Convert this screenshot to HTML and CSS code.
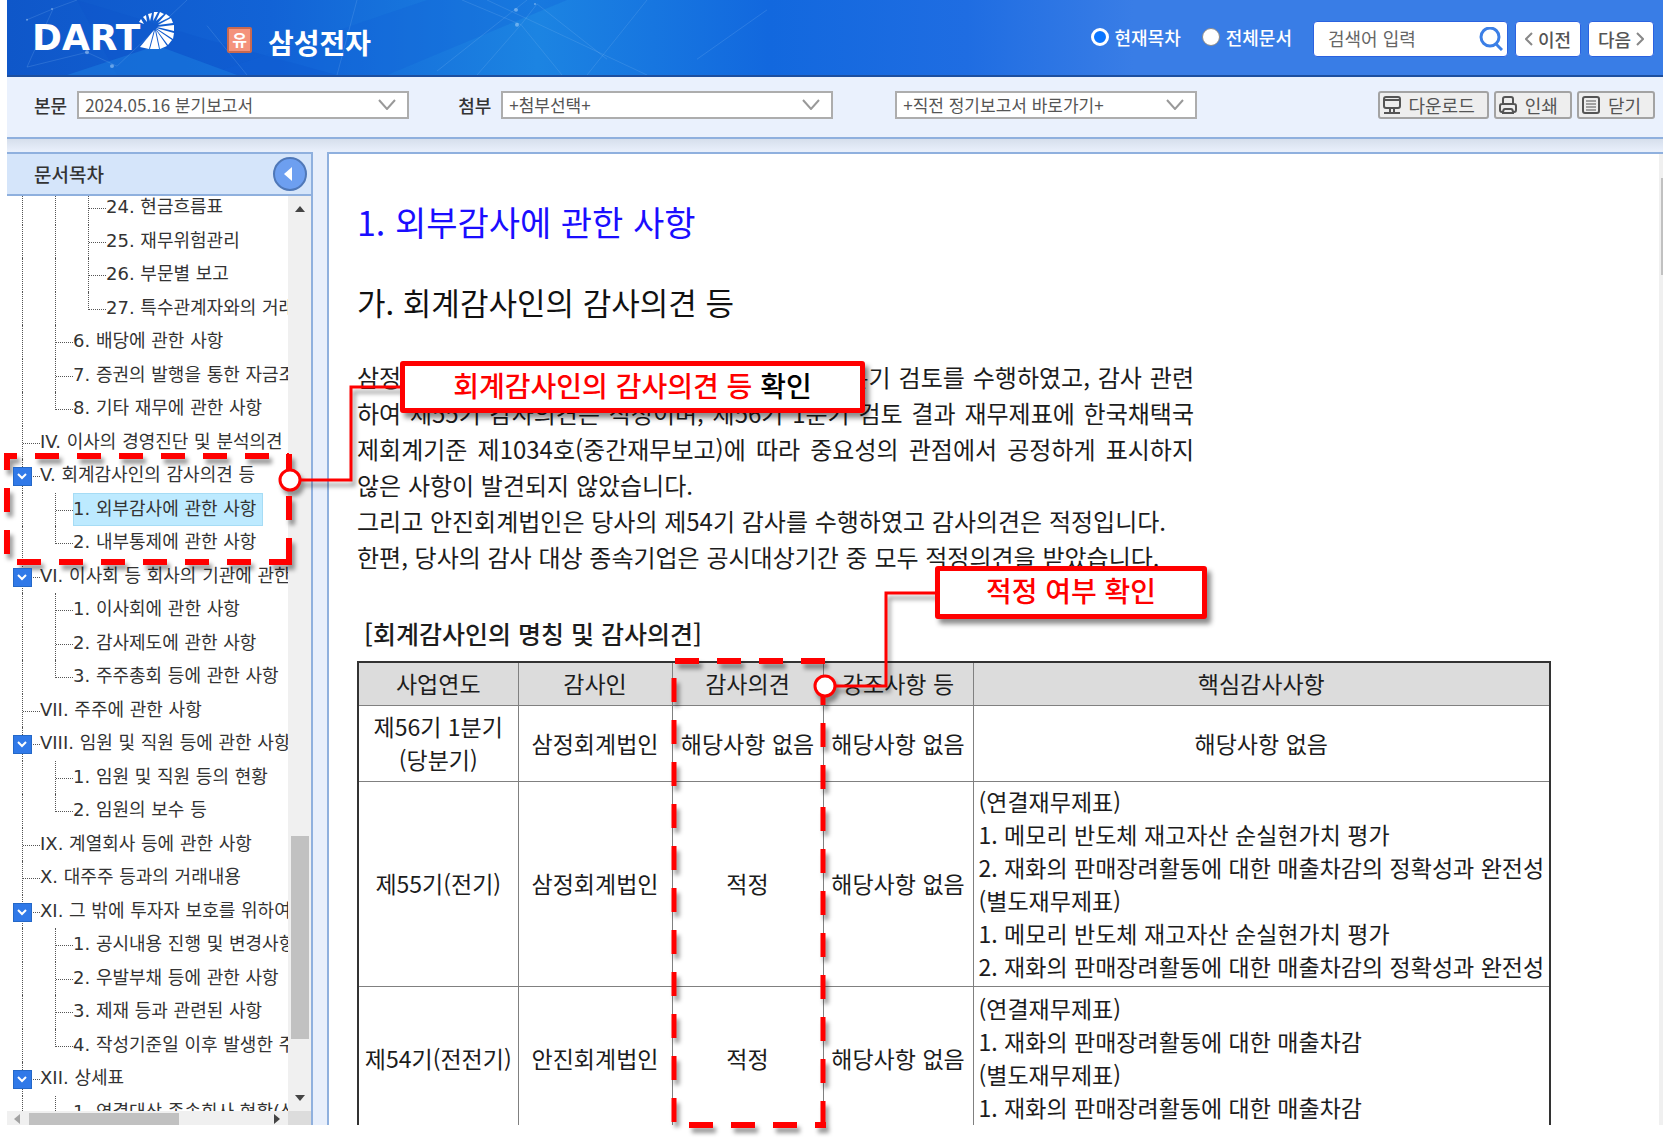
FILE: index.html
```html
<!DOCTYPE html>
<html lang="ko">
<head>
<meta charset="utf-8">
<title>삼성전자 - 분기보고서</title>
<link rel="stylesheet" href="styles.css">
</head>
<body>
<div class="app">
  <header class="top">
    <svg class="top-art" viewBox="0 0 1656 76" preserveAspectRatio="none" aria-hidden="true">
      <defs>
        <linearGradient id="sea" x1="0" x2="1"><stop offset="0" stop-color="#0f57c9"/><stop offset=".16" stop-color="#1263d6"/><stop offset=".32" stop-color="#1c84e2"/><stop offset=".46" stop-color="#1268de"/><stop offset=".58" stop-color="#1f6de2"/><stop offset=".68" stop-color="#397de6"/><stop offset="1" stop-color="#397de6"/></linearGradient>
      </defs>
      <path fill="url(#sea)" d="M0 0h1656v76H0z"/>
      <path fill="#0c54cb" opacity=".3" d="M70 0L110 76H330L200 40z"/>
      <path fill="#0f60d6" opacity=".3" d="M200 76L420 0H560L380 76z"/>
      <path fill="#1b7fe2" opacity=".5" d="M60 76L150 46L230 76z"/>
      <g stroke="#8fc4f7" stroke-opacity=".2" fill="none">
        <path d="M20 20L46 9L70 0M20 68L46 9M20 68L80 53L110 67L180 0M200 26L240 76M330 76L350 0M430 72L520 0M455 0L514 25L470 76M514 25L555 76M514 25L530 4L600 60M480 0L640 76M640 0L580 76M690 60L760 10"/>
      </g>
      <g fill="#b9dbfb" fill-opacity=".5"><circle cx="20" cy="20" r="1"/><circle cx="45" cy="9" r="1"/><circle cx="80" cy="53" r="2"/><circle cx="105" cy="67" r="2"/><circle cx="510" cy="25" r="2"/><circle cx="509" cy="10" r="2"/><circle cx="528" cy="4" r="1"/></g>
    </svg>
    <a class="logo" href="#">DART<svg class="fan" viewBox="0 0 36 38" aria-hidden="true">
      <g fill="#fff">
        <path d="M16 18L11 37L2 35z"/><path d="M17 18L21 37L12 37z"/><path d="M18 18L29 34L22 37z"/><path d="M18 17L34 28L30 33z"/><path d="M18 16L36 21L35 27z"/><path d="M19 15L36 13L36 19z"/><path d="M20 13L33 6L35 11z"/><path d="M20 11L28 2L32 5z"/><path d="M18 9L22 0L26 2z"/><path d="M15 9L16 0L20 0z"/><path d="M12 9L10 2L14 1z"/><path d="M9 10L5 5L8 3z"/><path d="M6 12L1 10L3 7z"/>
      </g></svg></a>
    <span class="badge">유</span>
    <h1 class="company">삼성전자</h1>
    <form class="search">
      <label class="scope"><input type="radio" name="scope" checked>현재목차</label>
      <label class="scope"><input type="radio" name="scope">전체문서</label>
      <div class="searchbox">
        <input type="text" placeholder="검색어 입력" aria-label="검색어 입력">
        <button type="button" aria-label="검색"><svg viewBox="0 0 24 24" width="24" height="24"><circle cx="11" cy="10" r="9" fill="none" stroke="#3b7fe6" stroke-width="3"/><path d="M17 17l6 6" stroke="#3b7fe6" stroke-width="3"/></svg></button>
      </div>
      <button type="button" class="step"><svg viewBox="0 0 8 14" width="8" height="14"><path d="M7 1L1 7l6 6"/></svg>이전</button>
      <button type="button" class="step">다음<svg viewBox="0 0 8 14" width="8" height="14"><path d="M1 1l6 6l-6 6"/></svg></button>
    </form>
  </header>

  <div class="toolbar">
    <label for="doc">본문</label>
    <div class="pick wide"><select id="doc"><option>2024.05.16 분기보고서</option></select><svg viewBox="0 0 18 11" width="18" height="11"><path d="M1 1l8 9l8-9"/></svg></div>
    <label for="att" class="second">첨부</label>
    <div class="pick wide"><select id="att"><option>+첨부선택+</option></select><svg viewBox="0 0 18 11" width="18" height="11"><path d="M1 1l8 9l8-9"/></svg></div>
    <div class="pick prev"><select aria-label="직전 정기보고서"><option>+직전 정기보고서 바로가기+</option></select><svg viewBox="0 0 18 11" width="18" height="11"><path d="M1 1l8 9l8-9"/></svg></div>
    <div class="tools">
      <button type="button"><svg viewBox="0 0 18 18" width="18" height="18"><rect x="1" y="1" width="16" height="11" rx="2"/><path d="M1 4h16M7 12v4M11 12v4M1 17h16"/></svg>다운로드</button>
      <button type="button"><svg viewBox="0 0 18 18" width="18" height="18"><path d="M4 8V3q0-2 2-2h6q2 0 2 2v5M4 16H3q-2 0-2-2v-4q0-2 2-2h12q2 0 2 2v4q0 2-2 2h-1M4 17q0-4 2-4h6q2 0 2 4z"/></svg>인쇄</button>
      <button type="button"><svg viewBox="0 0 18 18" width="18" height="18"><rect x="1" y="1" width="16" height="16" rx="2"/><path class="fine" d="M4 5h10M4 8h10M4 11h10M4 14h10"/></svg>닫기</button>
    </div>
  </div>

  <div class="work">
    <nav class="side" aria-label="문서목차">
      <div class="side-head"><h2>문서목차</h2><button type="button" aria-label="목차 접기"><svg viewBox="0 0 8 14" width="8" height="14"><path d="M8 0v14L0 7z" fill="#fff"/></svg></button></div>
      <div class="side-body">
        <div class="tree-clip">
          <ul class="tree">
            <li><i class="rail"></i><i class="rail"></i><i class="tee"></i><a href="#">24. 현금흐름표</a></li>
            <li><i class="rail"></i><i class="rail"></i><i class="tee"></i><a href="#">25. 재무위험관리</a></li>
            <li><i class="rail"></i><i class="rail"></i><i class="tee"></i><a href="#">26. 부문별 보고</a></li>
            <li><i class="rail"></i><i class="rail"></i><i class="tee last"></i><a href="#">27. 특수관계자와의 거래</a></li>
            <li><i class="rail"></i><i class="tee"></i><a href="#">6. 배당에 관한 사항</a></li>
            <li><i class="rail"></i><i class="tee"></i><a href="#">7. 증권의 발행을 통한 자금조달에 관한 사항</a></li>
            <li><i class="rail"></i><i class="tee last"></i><a href="#">8. 기타 재무에 관한 사항</a></li>
            <li><i class="tee"></i><a href="#">IV. 이사의 경영진단 및 분석의견</a></li>
            <li><i class="tee"><button type="button" aria-label="접기"><svg viewBox="0 0 11 7" width="11" height="7"><path d="M1 1l4 4l4-4"/></svg></button></i><a href="#">V. 회계감사인의 감사의견 등</a></li>
            <li><i class="rail"></i><i class="tee"></i><a href="#" class="on" aria-current="page">1. 외부감사에 관한 사항</a></li>
            <li><i class="rail"></i><i class="tee last"></i><a href="#">2. 내부통제에 관한 사항</a></li>
            <li><i class="tee"><button type="button" aria-label="접기"><svg viewBox="0 0 11 7" width="11" height="7"><path d="M1 1l4 4l4-4"/></svg></button></i><a href="#">VI. 이사회 등 회사의 기관에 관한 사항</a></li>
            <li><i class="rail"></i><i class="tee"></i><a href="#">1. 이사회에 관한 사항</a></li>
            <li><i class="rail"></i><i class="tee"></i><a href="#">2. 감사제도에 관한 사항</a></li>
            <li><i class="rail"></i><i class="tee last"></i><a href="#">3. 주주총회 등에 관한 사항</a></li>
            <li><i class="tee"></i><a href="#">VII. 주주에 관한 사항</a></li>
            <li><i class="tee"><button type="button" aria-label="접기"><svg viewBox="0 0 11 7" width="11" height="7"><path d="M1 1l4 4l4-4"/></svg></button></i><a href="#">VIII. 임원 및 직원 등에 관한 사항</a></li>
            <li><i class="rail"></i><i class="tee"></i><a href="#">1. 임원 및 직원 등의 현황</a></li>
            <li><i class="rail"></i><i class="tee last"></i><a href="#">2. 임원의 보수 등</a></li>
            <li><i class="tee"></i><a href="#">IX. 계열회사 등에 관한 사항</a></li>
            <li><i class="tee"></i><a href="#">X. 대주주 등과의 거래내용</a></li>
            <li><i class="tee"><button type="button" aria-label="접기"><svg viewBox="0 0 11 7" width="11" height="7"><path d="M1 1l4 4l4-4"/></svg></button></i><a href="#">XI. 그 밖에 투자자 보호를 위하여 필요한 사항</a></li>
            <li><i class="rail"></i><i class="tee"></i><a href="#">1. 공시내용 진행 및 변경사항</a></li>
            <li><i class="rail"></i><i class="tee"></i><a href="#">2. 우발부채 등에 관한 사항</a></li>
            <li><i class="rail"></i><i class="tee"></i><a href="#">3. 제재 등과 관련된 사항</a></li>
            <li><i class="rail"></i><i class="tee last"></i><a href="#">4. 작성기준일 이후 발생한 주요사항</a></li>
            <li><i class="tee"><button type="button" aria-label="접기"><svg viewBox="0 0 11 7" width="11" height="7"><path d="M1 1l4 4l4-4"/></svg></button></i><a href="#">XII. 상세표</a></li>
            <li><i class="rail"></i><i class="tee"></i><a href="#">1. 연결대상 종속회사 현황(상세)</a></li>
          </ul>
        </div>
        <div class="vbar"><svg viewBox="0 0 10 6" width="10" height="6"><path d="M0 6L5 0l5 6z"/></svg><span class="vthumb"></span><svg viewBox="0 0 10 6" width="10" height="6"><path d="M0 0L5 6l5-6z"/></svg></div>
        <div class="hbar"><svg class="dim" viewBox="0 0 6 10" width="6" height="10"><path d="M6 0L0 5l6 5z"/></svg><span class="hthumb"></span><svg viewBox="0 0 6 10" width="6" height="10"><path d="M0 0L6 5l-6 5z"/></svg></div>
        <div class="corner"></div>
      </div>
    </nav>

    <main class="doc">
      <div class="page">
        <h2 class="title">1. 외부감사에 관한 사항</h2>
        <h3 class="sub">가. 회계감사인의 감사의견 등</h3>
        <div class="body">
          <p><span class="full">삼정회계법인은 당사의 제55기 감사 및 제56기 1분기 검토를 수행하였고, 감사 관련</span><span class="full">하여 제55기 감사의견은 적정이며, 제56기 1분기 검토 결과 재무제표에 한국채택국</span><span class="full">제회계기준 제1034호(중간재무보고)에 따라 중요성의 관점에서 공정하게 표시하지</span><span>않은 사항이 발견되지 않았습니다.</span></p>
          <p>그리고 안진회계법인은 당사의 제54기 감사를 수행하였고 감사의견은 적정입니다.</p>
          <p>한편, 당사의 감사 대상 종속기업은 공시대상기간 중 모두 적정의견을 받았습니다.</p>
        </div>
        <table>
          <caption>[회계감사인의 명칭 및 감사의견]</caption>
          <colgroup><col class="c1"><col class="c2"><col class="c3"><col class="c4"><col class="c5"></colgroup>
          <thead><tr><th>사업연도</th><th>감사인</th><th>감사의견</th><th>강조사항 등</th><th>핵심감사사항</th></tr></thead>
          <tbody>
            <tr class="r1"><td>제56기 1분기<br>(당분기)</td><td>삼정회계법인</td><td>해당사항 없음</td><td>해당사항 없음</td><td>해당사항 없음</td></tr>
            <tr class="r2"><td>제55기(전기)</td><td>삼정회계법인</td><td>적정</td><td>해당사항 없음</td><td class="kam">(연결재무제표)<br>1. 메모리 반도체 재고자산 순실현가치 평가<br>2. 재화의 판매장려활동에 대한 매출차감의 정확성과 완전성<br>(별도재무제표)<br>1. 메모리 반도체 재고자산 순실현가치 평가<br>2. 재화의 판매장려활동에 대한 매출차감의 정확성과 완전성</td></tr>
            <tr class="r3"><td>제54기(전전기)</td><td>안진회계법인</td><td>적정</td><td>해당사항 없음</td><td class="kam">(연결재무제표)<br>1. 재화의 판매장려활동에 대한 매출차감<br>(별도재무제표)<br>1. 재화의 판매장려활동에 대한 매출차감</td></tr>
          </tbody>
        </table>
      </div>
      <div class="docbar"><span></span></div>
    </main>
  </div>

  <div class="notes">
    <svg width="1300" height="1141" viewBox="0 0 1300 1141" aria-hidden="true">
      <g class="dash">
        <path d="M4 456H289" stroke-dashoffset="11"/><path d="M289 454V562" /><path d="M17 562H292"/><path d="M7 453V562" stroke-dashoffset="7"/>
      </g>
      <g class="dash thin">
        <path d="M674 678V1125"/><path d="M823 681V1128"/>
        <path d="M675 661H826" class="h"/><path d="M689 1125H826" class="h"/>
      </g>
      <g class="wire">
        <path d="M289 480H351V387H400"/><circle cx="290" cy="480" r="10"/>
        <path d="M825 686H886V593H935"/><circle cx="825" cy="686" r="10"/>
      </g>
    </svg>
    <div class="callout one">회계감사인의 감사의견 등 <b>확인</b></div>
    <div class="callout two">적정 여부 확인</div>
  </div>
</div>
</body>
</html>
```
FILE: styles.css
```css
* { box-sizing: border-box; }
body {
  margin: 0;
  background: #fff;
  font-family: "Noto Sans CJK KR", "Liberation Sans", sans-serif;
  color: #333;
}
button, input, select { font: inherit; color: inherit; margin: 0; }
a { color: inherit; text-decoration: none; }
h1, h2, h3, p, ul { margin: 0; padding: 0; }

.app {
  position: relative;
  display: flex;
  flex-direction: column;
  height: 100vh;
  padding: 0 0 16px 7px;
  overflow: hidden;
}

/* top banner */
.top {
  position: relative;
  display: flex;
  align-items: center;
  flex: none;
  height: 77px;
  padding: 0 9px 0 25px;
  border-bottom: 2px solid #1d4f9f;
  background: #397de6;
  color: #fff;
}
.top-art { position: absolute; left: 0; top: 0; width: 100%; height: 100%; }
.logo {
  position: relative;
  display: flex;
  width: 144px;
  font: bold 36px/40px "DejaVu Sans", sans-serif;
}
.fan { position: absolute; left: 106px; top: -6px; width: 36px; height: 38px; }
.badge {
  position: relative;
  width: 25px;
  height: 26px;
  margin: 4px 16px 0 51px;
  border: 2px solid #c9694f;
  border-radius: 2px;
  background: #f4937c;
  font: bold 16px/21px "Noto Sans CJK KR", sans-serif;
  text-align: center;
}
.company { position: relative; padding-top: 8px; font-size: 28px; line-height: 36px; font-weight: 700; }
.search { position: relative; display: flex; align-items: center; gap: 7px; margin-left: auto; padding-top: 3px; }
.scope { display: flex; align-items: center; gap: 6px; margin-right: 14px; padding-bottom: 4px; font-size: 18px; line-height: 24px; font-weight: 500; }
.scope input {
  appearance: none;
  width: 18px;
  height: 18px;
  border: 1px solid #8a8a8a;
  border-radius: 50%;
  background: #fff;
}
.scope input:checked { border: 3px solid #fff; background: #0a75ff; }
.searchbox, .step { height: 36px; border: 1px solid #2a62e0; border-radius: 4px; background: #fff; color: #555; }
.searchbox { display: flex; align-items: center; width: 195px; padding: 0 4px 0 14px; }
.searchbox input { flex: 1; min-width: 0; padding: 0 0 3px; border: 0; outline: 0; font-size: 18px; line-height: 26px; }
.searchbox input::placeholder { color: #666; }
.searchbox button { display: flex; padding: 0; border: 0; background: none; }
.step { display: flex; align-items: center; justify-content: center; gap: 5px; width: 66px; padding: 0; font-size: 18px; font-weight: 500; }
.step svg { fill: none; stroke: #888; stroke-width: 2; }

/* document pickers */
.toolbar {
  display: flex;
  align-items: center;
  flex: none;
  height: 62px;
  padding: 0 8px 5px 27px;
  border-bottom: 2px solid #8fb0de;
  background: #eaf1fd;
}
.toolbar label { margin-right: 10px; font-size: 18px; line-height: 26px; font-weight: 500; }
.toolbar .second { margin-left: 49px; }
.pick { position: relative; }
.pick.wide { width: 332px; }
.pick.prev { width: 302px; margin-left: 62px; }
.pick select {
  appearance: none;
  display: block;
  width: 100%;
  height: 28px;
  padding: 0 6px;
  border: 2px solid #adadad;
  border-radius: 0;
  background: #fff;
  color: #555;
  font-size: 17px;
  line-height: 22px;
}
.pick svg { position: absolute; right: 13px; top: 8px; fill: none; stroke: #999; stroke-width: 2; }
.tools { display: flex; gap: 5px; margin-left: auto; }
.tools button {
  display: flex;
  align-items: center;
  gap: 8px;
  height: 28px;
  padding: 0 12px 0 3px;
  border: 2px solid #a3a3a3;
  border-radius: 3px;
  background: #eee;
  color: #555;
  font-size: 18px;
}
.tools svg { fill: none; stroke: #555; stroke-width: 2; }
.tools .fine { stroke-width: 1; }

/* work area */
.work {
  display: flex;
  flex: 1;
  min-height: 0;
  gap: 14px;
  padding-top: 13px;
  background: linear-gradient(#d6dfec, #e8effb 12px);
}
.side { display: flex; flex-direction: column; flex: none; width: 306px; border: solid #8fb0de; border-width: 2px 2px 0 0; background: #fff; }
.side-head {
  display: flex;
  align-items: center;
  justify-content: space-between;
  flex: none;
  height: 42px;
  padding: 0 4px 0 27px;
  border-bottom: 2px solid #8fb0de;
  background: #d5e5fa;
}
.side-head h2 { font-size: 19px; line-height: 28px; font-weight: 500; }
.side-head button {
  display: flex;
  align-items: center;
  justify-content: center;
  width: 34px;
  height: 34px;
  padding: 0 4px 0 0;
  border: 2px solid #4f78b8;
  border-radius: 50%;
  background: #6d9ff0;
}
.side-body { display: grid; grid-template: minmax(0, 1fr) 14px / minmax(0, 1fr) 23px; flex: 1; min-height: 0; }
.tree-clip { overflow: hidden; }
.tree { margin-top: -5px; list-style: none; font-family: "DejaVu Sans", "Noto Sans CJK KR", sans-serif; }
.tree li { display: flex; height: 33px; padding-left: 15px; font-size: 18px; line-height: 32px; white-space: nowrap; }
.tree li:nth-child(odd) { height: 34px; }
.rail { flex: none; width: 33px; border-left: 1px dotted #555; }
.tee { position: relative; flex: none; width: 18px; border-left: 1px dotted #555; }
.tee::after { content: ""; position: absolute; left: 0; top: 17px; width: 17px; border-top: 1px dotted #555; }
.tee.last { height: 18px; }
.tee button {
  position: absolute;
  left: -10px;
  top: 8px;
  z-index: 1;
  display: flex;
  align-items: center;
  justify-content: center;
  width: 19px;
  height: 19px;
  padding: 0;
  border: 1px solid #2468c8;
  background: #3079e8;
}
.tee svg { fill: none; stroke: #fff; stroke-width: 2; }
.tree .on { padding-right: 7px; background: #bdeaff; box-shadow: inset 0 0 0 1px #a6dcf5; }
.vbar { display: flex; flex-direction: column; align-items: center; padding: 10px 0; background: #f0f0f0; fill: #444; }
.vthumb { width: 18px; height: 203px; margin: auto 0 56px; background: #c1c1c1; }
.hbar { display: flex; align-items: center; padding: 2px 8px 0 7px; background: #f0f0f0; fill: #444; }
.hbar .dim { fill: #a3a3a3; }
.hthumb { align-self: stretch; width: 150px; margin: 0 auto 0 9px; background: #c1c1c1; }
.corner { background: #dcdcdc; }

/* report */
.doc { display: flex; flex: 1; min-width: 0; border: solid #8fb0de; border-width: 2px 0 0 2px; background: #fff; overflow: hidden; }
.page { flex: 1; min-width: 0; padding: 44px 28px 0; color: #1c1c1c; }
.title { color: #1a0dff; font-size: 34px; line-height: 48px; font-weight: 400; }
.sub { margin-top: 34px; color: #111; font-size: 31px; line-height: 44px; font-weight: 400; }
.body { max-width: 837px; margin-top: 35px; font-size: 24px; line-height: 36px; }
.body p { white-space: nowrap; }
.body span { display: block; }
.body .full { text-align-last: justify; }
table { width: 1194px; margin-top: 40px; border: 2px solid #333; border-collapse: collapse; table-layout: fixed; font-size: 23px; line-height: 33px; }
caption { padding: 0 0 10px 7px; font-size: 25px; line-height: 36px; font-weight: 500; text-align: left; }
.c1 { width: 160px; }
.c2 { width: 154px; }
.c3 { width: 151px; }
.c4 { width: 150px; }
th, td { padding: 0; border: 1px solid #808080; text-align: center; vertical-align: middle; font-weight: 400; white-space: nowrap; }
th { height: 43px; background: #dcdcdc; }
.r1 td { height: 76px; }
.r2 td { height: 205px; }
.r3 td { height: 145px; }
td.kam { padding-left: 5px; text-align: left; }
.docbar { flex: none; width: 4px; padding-top: 24px; background: #f0f0f0; }
.docbar span { display: block; height: 97px; margin-left: 2px; background: #c1c1c1; }

/* annotations over the page */
.notes { position: absolute; inset: 0; overflow: hidden; pointer-events: none; }
.notes svg { display: block; filter: drop-shadow(3px 5px 2px rgba(0, 0, 0, .4)); }
.dash { fill: none; stroke: #f00; stroke-width: 6; stroke-dasharray: 24 18; }
.dash.thin { stroke-width: 5; }
.dash .h { stroke-width: 6; }
.wire { fill: none; stroke: #f00; stroke-width: 3; }
.wire circle { fill: #fff; }
.callout {
  position: absolute;
  border: 5px solid #f00;
  border-radius: 3px;
  background: #fff;
  box-shadow: 4px 5px 5px rgba(0, 0, 0, .45);
  color: #f00;
  font-size: 28px;
  line-height: 38px;
  font-weight: 500;
  text-align: center;
  white-space: nowrap;
}
.callout b { color: #000; font-weight: 500; }
.one { left: 400px; top: 361px; width: 465px; height: 52px; }
.two { left: 935px; top: 566px; width: 272px; height: 53px; }
```
